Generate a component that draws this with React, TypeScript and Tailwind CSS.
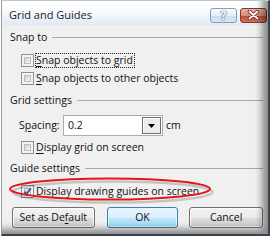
import React from "react";

function CheckBox({ checked }: { checked?: boolean }) {
  return (
    <span className="relative flex h-[13px] w-[13px] shrink-0 border border-[#8e8f8f] bg-[#f4f4f4] p-[2px]">
      <span className="h-full w-full border border-[#b9bdc3] bg-gradient-to-br from-[#cdd0d6] to-[#f7f7f7]" />
      {checked && (
        <svg className="absolute left-0 top-0" width="11" height="11" viewBox="0 0 11 11">
          <path d="M2.3 5.6 L4.4 8.2 L8.8 2.3" stroke="#3e5486" strokeWidth="1.9" fill="none" />
        </svg>
      )}
    </span>
  );
}

function GroupTitle({ title }: { title: string }) {
  return (
    <div className="flex h-[13px] items-center gap-[5px]">
      <span>{title}</span>
      <span className="h-px flex-1 bg-[#a9a9a9]" />
    </div>
  );
}

function Option({ label, checked, focused, className }: { label: React.ReactNode; checked?: boolean; focused?: boolean; className?: string }) {
  return (
    <div className={"flex h-[16px] items-center pl-[11px] " + (className ?? "")}>
      <CheckBox checked={checked} />
      <span
        className={
          "ml-px flex h-[15px] items-center border pr-px leading-none " +
          (focused ? "border-dotted border-[#222]" : "border-transparent")
        }
      >
        {label}
      </span>
    </div>
  );
}

export default function App() {
  return (
    <div className="relative h-[240px] w-[274px] overflow-hidden bg-white font-['Open_Sans',sans-serif] text-[10.5px] text-[#111]">
      <div className="relative ml-px flex h-[236px] w-[269px] flex-col border-b-2 border-l border-r-2 border-t border-b-[#3a424c] border-l-[#9a9a9a] border-r-[#3a424c] border-t-[#c4c4c4] bg-[#f0f0f0]">
        {/* title bar */}
        <div className="flex h-[24px] items-center bg-[linear-gradient(180deg,#ffffff_0%,#f7fafd_45%,#dfeaf6_100%)] pl-[7px] pr-px pt-[4px]">
          <span className="text-[11px] text-[#1a1a1a]">Grid and Guides</span>
          <div className="ml-auto flex gap-[3px]">
            <div className="flex h-[15px] w-[27px] items-center justify-center rounded-[3px] border border-[#8a9bb2] bg-[linear-gradient(180deg,#fbfdff_0%,#e4eef9_50%,#c9dcf0_51%,#d8e7f6_100%)] text-[13px] font-bold leading-none text-white [text-shadow:0_0_1px_#4d5d72,0_0_1px_#4d5d72,0_0_1px_#4d5d72]">
              ?
            </div>
            <div className="flex h-[15px] w-[27px] items-center justify-center rounded-[3px] border border-[#7a3b2e] bg-[linear-gradient(180deg,#eab3a4_0%,#d98a74_50%,#c3482b_51%,#d0725a_100%)]">
              <svg width="13" height="10" viewBox="0 0 13 10">
                <path d="M2.5 1.5 L10.5 8.5 M10.5 1.5 L2.5 8.5" stroke="#5a1e12" strokeWidth="3.6" strokeLinecap="round" />
                <path d="M2.5 1.5 L10.5 8.5 M10.5 1.5 L2.5 8.5" stroke="#ffffff" strokeWidth="2" strokeLinecap="round" />
              </svg>
            </div>
          </div>
        </div>

        {/* body */}
        <div className="flex flex-col pl-[8px] pr-[5px]">
          <div className="mt-[6px]">
            <GroupTitle title="Snap to" />
          </div>
          <Option
            className="mt-[8px]"
            focused
            label={
              <>
                <span className="underline underline-offset-2">S</span>nap objects to grid
              </>
            }
          />
          <Option
            className="mt-[2px]"
            label={
              <>
                <span className="underline underline-offset-2">S</span>nap objects to other objects
              </>
            }
          />
          <div className="mt-[8px]">
            <GroupTitle title="Grid settings" />
          </div>
          <div className="ml-[9px] mt-[8px] flex h-[21px] items-center">
            <span className="w-[44px]">
              S<span className="underline underline-offset-2">p</span>acing:
            </span>
            <div className="flex h-[21px] w-[100px] items-center border border-[#abadb3] bg-white pl-[4px]">
              <span className="flex-1">0.2</span>
              <span className="mr-px flex h-[17px] w-[19px] items-center justify-center border border-[#6d6d6d] bg-[#ececec] shadow-[inset_1px_1px_0_#ffffff]">
                <svg width="7" height="4" viewBox="0 0 7 4">
                  <path d="M0 0 H7 L3.5 4 Z" fill="#000" />
                </svg>
              </span>
            </div>
            <span className="ml-[3px]">cm</span>
          </div>
          <Option
            className="mt-[3px]"
            label={
              <>
                <span className="underline underline-offset-2">D</span>isplay grid on screen
              </>
            }
          />
          <div className="mt-[7px]">
            <GroupTitle title="Guide settings" />
          </div>
          <Option className="mt-[8px]" checked label="Display drawing guides on screen" />

          <div className="mt-[8px] flex h-[21px]">
            <button className="ml-[2px] h-[21px] w-[83px] rounded-[3px] border border-[#707070] bg-[linear-gradient(180deg,#f2f2f2_0%,#ebebeb_50%,#dddddd_51%,#cfcfcf_100%)] shadow-[inset_0_0_0_1px_#fbfbfb]">
              Set as De<span className="underline underline-offset-2">f</span>ault
            </button>
            <button className="ml-[12px] h-[21px] w-[72px] rounded-[3px] border border-[#3c7fb1] bg-[linear-gradient(180deg,#eaf6fd_0%,#d9f0fc_50%,#bee6fd_51%,#a7d9f5_100%)] shadow-[inset_0_0_0_1px_#e4f4fc]">
              OK
            </button>
            <button className="ml-[11px] h-[21px] w-[74px] rounded-[3px] border border-[#707070] bg-[linear-gradient(180deg,#f2f2f2_0%,#ebebeb_50%,#dddddd_51%,#cfcfcf_100%)] shadow-[inset_0_0_0_1px_#fbfbfb]">
              Cancel
            </button>
          </div>
        </div>

        {/* frame shadow */}
        <div className="pointer-events-none absolute inset-0 shadow-[inset_-8px_-7px_7px_-2px_rgba(0,0,0,0.42)]" />
      </div>

      {/* red annotation ellipse */}
      <svg className="pointer-events-none absolute left-[8px] top-[176px]" width="208" height="28" viewBox="0 0 208 28">
        <ellipse cx="103" cy="14" rx="100" ry="10.5" fill="none" stroke="#000" strokeOpacity="0.18" strokeWidth="2.5" transform="translate(1.5 2)" />
        <ellipse cx="102" cy="13" rx="100" ry="10.5" fill="none" stroke="#e3161b" strokeWidth="2" />
      </svg>
    </div>
  );
}
